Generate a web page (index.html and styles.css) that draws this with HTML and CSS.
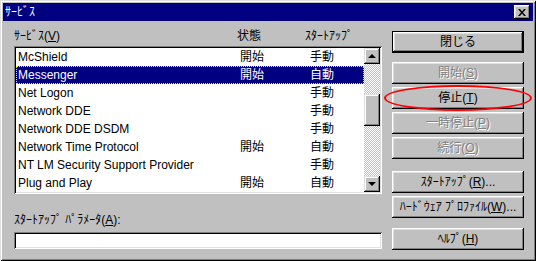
FILE: index.html
```
<!DOCTYPE html>
<html lang="ja">
<head>
  <meta charset="UTF-8">
  <title>ｻｰﾋﾞｽ</title>
  <link rel="stylesheet" href="styles.css">
</head>
<body>
  <div class="window">
    <div class="titlebar">
      <span class="title">ｻｰﾋﾞｽ</span>
      <span class="close">
        <svg width="8" height="7" viewBox="0 0 8 7"><path d="M0 0h2l2 2.5L6 0h2L5 3.5 8 7H6L4 4.5 2 7H0l3-3.5z" fill="#000"/></svg>
      </span>
    </div>

    <div class="content">
      <div class="left">
        <div class="headers">
          <span class="h-name">ｻｰﾋﾞｽ(<u>V</u>)</span>
          <span class="h-state">状態</span>
          <span class="h-start">ｽﾀｰﾄｱｯﾌﾟ</span>
        </div>

        <div class="listbox">
          <div class="rows">
            <div class="row"><span class="c-name">McShield</span><span class="c-state">開始</span><span class="c-start">手動</span></div>
            <div class="row selected"><span class="c-name">Messenger</span><span class="c-state">開始</span><span class="c-start">自動</span></div>
            <div class="row"><span class="c-name">Net Logon</span><span class="c-state"></span><span class="c-start">手動</span></div>
            <div class="row"><span class="c-name">Network DDE</span><span class="c-state"></span><span class="c-start">手動</span></div>
            <div class="row"><span class="c-name">Network DDE DSDM</span><span class="c-state"></span><span class="c-start">手動</span></div>
            <div class="row"><span class="c-name">Network Time Protocol</span><span class="c-state">開始</span><span class="c-start">自動</span></div>
            <div class="row"><span class="c-name">NT LM Security Support Provider</span><span class="c-state"></span><span class="c-start">手動</span></div>
            <div class="row"><span class="c-name">Plug and Play</span><span class="c-state">開始</span><span class="c-start">自動</span></div>
          </div>
          <div class="scrollbar">
            <div class="sb-btn"><span class="arrow-up"></span></div>
            <div class="sb-track">
              <div class="sb-thumb"></div>
            </div>
            <div class="sb-btn"><span class="arrow-down"></span></div>
          </div>
        </div>

        <div class="param-label">ｽﾀｰﾄｱｯﾌﾟ ﾊﾟﾗﾒｰﾀ(<u>A</u>):</div>
        <div class="param-input"></div>
      </div>

      <div class="buttons">
        <div class="btn default">閉じる</div>
        <div class="btn disabled first">開始(<u>S</u>)</div>
        <div class="btn">停止(<u>T</u>)</div>
        <div class="btn disabled">一時停止(<u>P</u>)</div>
        <div class="btn disabled">続行(<u>O</u>)</div>
        <div class="btn group">ｽﾀｰﾄｱｯﾌﾟ(<u>R</u>)...</div>
        <div class="btn">ﾊｰﾄﾞｳｪｱ ﾌﾟﾛﾌｧｲﾙ(<u>W</u>)...</div>
        <div class="btn help">ﾍﾙﾌﾟ(<u>H</u>)</div>
      </div>
    </div>

    <div class="mark"></div>
  </div>
</body>
</html>
```

FILE: styles.css
```
body {
  margin: 0;
  font-family: "Liberation Sans", "Noto Sans CJK JP", sans-serif;
  font-size: 12px;
  color: #000;
  background: #c0c0c0;
}

.window {
  position: relative;
  width: 536px;
  height: 261px;
  box-sizing: border-box;
  padding: 3px;
  background: #c0c0c0;
  box-shadow: inset 1px 1px #dfdfdf, inset -1px -1px #000,
              inset 2px 2px #fff, inset -2px -2px #808080;
}

.titlebar {
  height: 18px;
  background: #000080;
  color: #fff;
  display: flex;
  align-items: center;
  justify-content: space-between;
  padding: 0 3px 0 2px;
}

.title {
  line-height: 14px;
}

.close {
  width: 16px;
  height: 14px;
  box-sizing: border-box;
  background: #c0c0c0;
  display: flex;
  align-items: center;
  justify-content: center;
  box-shadow: inset -1px -1px #000, inset 1px 1px #fff,
              inset -2px -2px #808080, inset 2px 2px #dfdfdf;
}

.content {
  display: flex;
  padding-left: 11px;
}

.left {
  width: 368px;
}

.headers {
  display: flex;
  height: 25px;
  align-items: flex-end;
  line-height: 14px;
  padding-bottom: 3px;
  box-sizing: border-box;
}

.h-name { width: 223px; }
.h-state { width: 68px; }

.listbox {
  display: flex;
  height: 148px;
  box-sizing: border-box;
  padding: 2px;
  background: #fff;
  box-shadow: inset 1px 1px #808080, inset -1px -1px #fff,
              inset 2px 2px #000, inset -2px -2px #dfdfdf;
}

.rows {
  flex: 1;
}

.row {
  display: flex;
  height: 18px;
  line-height: 18px;
  padding-left: 2px;
}

.row.selected {
  background: #000080;
  color: #fff;
  outline: 1px dotted #ffff00;
  outline-offset: -1px;
}

.c-name { width: 222px; }
.c-state { width: 70px; }

.scrollbar {
  width: 16px;
  display: flex;
  flex-direction: column;
}

.sb-btn, .sb-thumb {
  height: 16px;
  box-sizing: border-box;
  background: #c0c0c0;
  display: flex;
  align-items: center;
  justify-content: center;
  box-shadow: inset -1px -1px #000, inset 1px 1px #dfdfdf,
              inset -2px -2px #808080, inset 2px 2px #fff;
}

.sb-track {
  flex: 1;
  background: repeating-conic-gradient(#c0c0c0 0 25%, #fff 0 50%) 0 0 / 2px 2px;
}

.sb-thumb {
  height: 32px;
  margin-top: 30px;
}

.arrow-up, .arrow-down {
  width: 0;
  height: 0;
  border-left: 4px solid transparent;
  border-right: 4px solid transparent;
}

.arrow-up { border-bottom: 4px solid #000; margin-top: -1px; }
.arrow-down { border-top: 4px solid #000; }

.param-label {
  line-height: 14px;
  margin-top: 19px;
  margin-bottom: 5px;
}

.param-input {
  height: 17px;
  background: #fff;
  box-shadow: inset 1px 1px #808080, inset -1px -1px #fff,
              inset 2px 2px #000, inset -2px -2px #dfdfdf;
}

.buttons {
  width: 132px;
  margin-left: 10px;
  padding-top: 10px;
  display: flex;
  flex-direction: column;
  gap: 3px;
}

.btn {
  height: 22px;
  box-sizing: border-box;
  display: flex;
  align-items: center;
  justify-content: center;
  line-height: 14px;
  box-shadow: inset -1px -1px #000, inset 1px 1px #fff,
              inset -2px -2px #808080, inset 2px 2px #dfdfdf;
}

.btn.default {
  box-shadow: inset 0 0 0 1px #000, inset -2px -2px #000, inset 2px 2px #fff,
              inset -3px -3px #808080, inset 3px 3px #dfdfdf;
}

.btn.first { margin-top: 6px; }
.btn.group { margin-top: 9px; }
.btn.help { margin-top: 7px; }

.btn.disabled {
  color: #808080;
  text-shadow: 1px 1px #fff;
}

.mark {
  position: absolute;
  left: 384px;
  top: 85px;
  width: 148px;
  height: 26px;
  box-sizing: border-box;
  border: 2px solid #ff0000;
  border-radius: 50%;
}
```
